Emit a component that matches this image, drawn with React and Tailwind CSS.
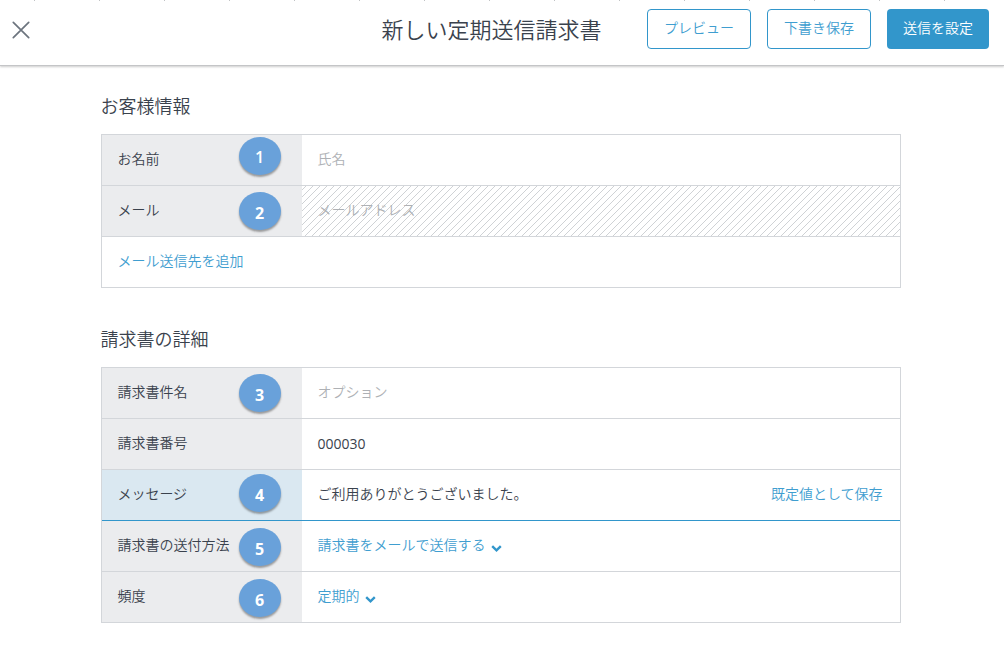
const FONT = "font-['Open_Sans','Noto_Sans_CJK_JP',sans-serif]";

const TICKS = Array.from({ length: 15 }, (_, i) => i);

function Chevron() {
  return (
    <svg className="ml-1.5 mt-[6px] h-[9px] w-[11px]" viewBox="0 0 11 9" fill="none">
      <path d="M1.2 2.2 L5.5 6.3 L9.8 2.2" stroke="#3296cb" strokeWidth="2.4" />
    </svg>
  );
}

function Hatch() {
  return (
    <svg className="absolute inset-0 h-full w-full" shapeRendering="crispEdges">
      <defs>
        <pattern id="hatch" width="7" height="7" patternUnits="userSpaceOnUse">
          {[0, 1, 2, 3, 4, 5, 6].map((i) => (
            <rect key={i} x={i} y={(10 - i) % 7} width="1" height="1" fill="#cfd2d5" />
          ))}
        </pattern>
      </defs>
      <rect width="100%" height="100%" fill="url(#hatch)" />
    </svg>
  );
}

function Badge({ n, top, pad, weight = 'font-bold' }) {
  return (
    <span
      className={`absolute left-[137px] flex h-[38px] w-[42px] justify-center rounded-[50%] bg-[#69a1da] pr-px text-[16px] leading-[22px] text-white shadow-[0_2px_2px_rgba(0,0,0,0.35)] ${weight} ${top} ${pad}`}
    >
      {n}
    </span>
  );
}

function Row({ label, badge, active, last, hatch, children }) {
  return (
    <div
      className={`flex h-[51px] border-b ${active ? 'border-[#3296cb]' : last ? 'border-transparent -mb-px' : 'border-[#d3d6da]'}`}
    >
      <div
        className={`relative flex w-[200px] shrink-0 items-center pb-[2px] pl-[15.4px] ${active ? 'bg-[#dae8f1]' : 'bg-[#ebecee]'}`}
      >
        <span className="whitespace-nowrap">{label}</span>
        {badge}
      </div>
      <div className="relative flex flex-1 items-center pb-[2px] pl-[15.4px] pr-[17.5px]">
        {hatch && <Hatch />}
        {children}
      </div>
    </div>
  );
}

function Section({ title, children, gap }) {
  return (
    <section className={gap}>
      <h2 className="-ml-[0.4px] h-[27px] text-[18px] leading-[27px]">{title}</h2>
      <div className="mt-[14px] border border-[#d3d6da]">{children}</div>
    </section>
  );
}

export default function App() {
  return (
    <div className={`h-[657px] w-[1004px] overflow-hidden bg-white text-[14px] leading-[20px] font-[350] text-[#3a424d] ${FONT}`}>
      <header className="relative flex h-[66px] items-start justify-end gap-4 border-b border-[#c4c5c7] pr-[15px] pt-[9px] shadow-[0_1px_2px_rgba(0,0,0,0.2)]">
        <div className="absolute left-[34px] top-0 flex h-px gap-16">
          {TICKS.map((t) => (
            <span key={t} className="h-px w-px bg-[#c2c4c6]" />
          ))}
        </div>
        <svg className="absolute left-[12px] top-[21px] h-[18px] w-[18px]" viewBox="0 0 18 18" fill="none" stroke="#6c747e" strokeWidth="1.7" strokeLinecap="round">
          <path d="M1.3 1.3 L16.7 16.7 M16.7 1.3 L1.3 16.7" />
        </svg>
        <h1 className="mr-[29.5px] mt-[4px] text-[22px] leading-[32px]">新しい定期送信請求書</h1>
        <button className="h-10 w-[104px] rounded-[4px] border border-[#3296cb] pb-[2px] text-[#3f9ed0]">プレビュー</button>
        <button className="h-10 w-[104px] rounded-[4px] border border-[#3296cb] pb-[2px] text-[#3f9ed0]">下書き保存</button>
        <button className="h-10 w-[102px] rounded-[4px] bg-[#3296cb] pb-[2px] text-white">送信を設定</button>
      </header>
      <main className="ml-[101px] w-[800px] pt-[27px]">
        <Section title="お客様情報">
          <Row label="お名前" badge={<Badge n="1" top="top-[2px]" pad="pt-[9px]" weight="font-semibold" />}>
            <span className="text-[#aeb1b5]">氏名</span>
          </Row>
          <Row label="メール" hatch badge={<Badge n="2" top="top-[6px]" pad="pt-[10px]" />}>
            <span className="relative text-[#aeb1b5]">メールアドレス</span>
          </Row>
          <div className="flex h-[50px] items-center pb-[2px] pl-[15.4px] text-[#3f9ed0]">メール送信先を追加</div>
        </Section>
        <Section title="請求書の詳細" gap="mt-[38px]">
          <Row label="請求書件名" badge={<Badge n="3" top="top-[6px]" pad="pt-[10px]" />}>
            <span className="text-[#aeb1b5]">オプション</span>
          </Row>
          <Row label="請求書番号">
            <span className="pt-[2px] font-normal">000030</span>
          </Row>
          <Row label="メッセージ" active badge={<Badge n="4" top="top-[4px]" pad="pt-[10px]" />}>
            <span>ご利用ありがとうございました。</span>
            <span className="ml-auto text-[#3f9ed0]">既定値として保存</span>
          </Row>
          <Row label="請求書の送付方法" badge={<Badge n="5" top="top-[7px]" pad="pt-[10px]" />}>
            <span className="text-[#3f9ed0]">請求書をメールで送信する</span>
            <Chevron />
          </Row>
          <Row label="頻度" last badge={<Badge n="6" top="top-[7px]" pad="pt-[10px]" />}>
            <span className="text-[#3f9ed0]">定期的</span>
            <Chevron />
          </Row>
        </Section>
      </main>
    </div>
  );
}
